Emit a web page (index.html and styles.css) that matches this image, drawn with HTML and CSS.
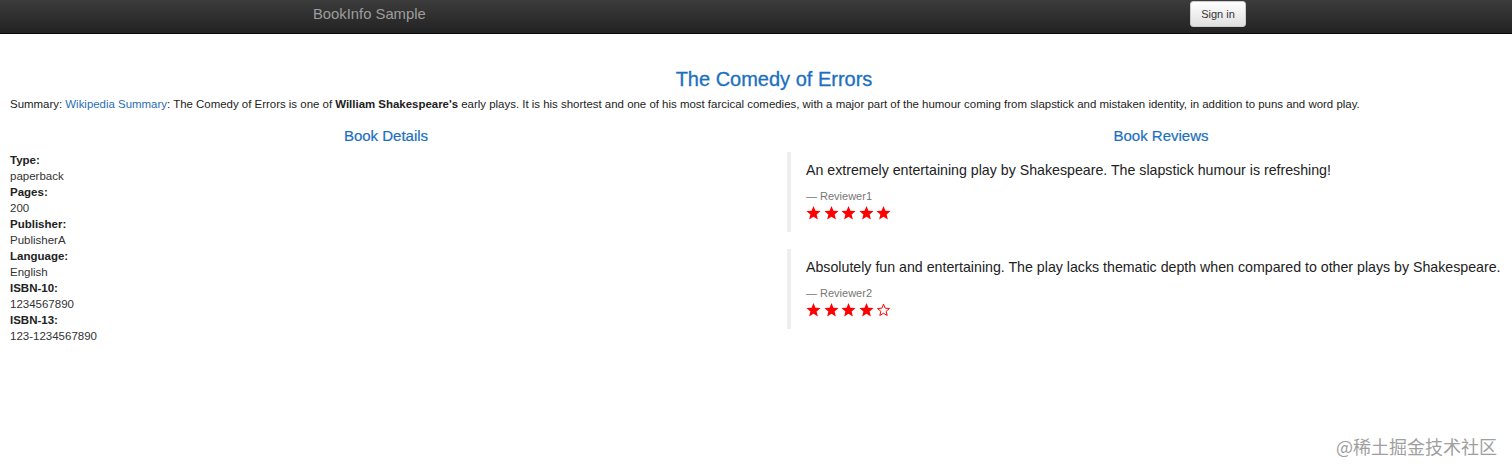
FILE: index.html
```html
<!DOCTYPE html>
<html>
<head>
<meta charset="utf-8">
<title>Bookinfo</title>
<link rel="stylesheet" href="styles.css">
</head>
<body>
<nav class="navbar">
  <span class="brand">BookInfo Sample</span>
  <button class="signin">Sign in</button>
</nav>
<main class="page">
  <h3 class="title">The Comedy of Errors</h3>
  <p class="summary">Summary: <a href="#">Wikipedia Summary</a>: The Comedy of Errors is one of <b>William Shakespeare's</b> early plays. It is his shortest and one of his most farcical comedies, with a major part of the humour coming from slapstick and mistaken identity, in addition to puns and word play.</p>
  <div class="cols">
    <section class="details">
      <h4 class="heading">Book Details</h4>
      <dl class="dl">
        <dt>Type:</dt><dd>paperback</dd>
        <dt>Pages:</dt><dd>200</dd>
        <dt>Publisher:</dt><dd>PublisherA</dd>
        <dt>Language:</dt><dd>English</dd>
        <dt>ISBN-10:</dt><dd>1234567890</dd>
        <dt>ISBN-13:</dt><dd>123-1234567890</dd>
      </dl>
    </section>
    <section class="reviews">
      <h4 class="heading">Book Reviews</h4>
      <blockquote class="review">
        <p class="rtext">An extremely entertaining play by Shakespeare. The slapstick humour is refreshing!</p>
        <small class="who">— Reviewer1</small>
        <div class="stars">
          <svg viewBox="0 0 24 24"><path class="full" d="M12 1.5l3.1 7.6 8.2.6-6.3 5.3 2 8-7-4.3-7 4.3 2-8L.7 9.7l8.2-.6z"/></svg>
          <svg viewBox="0 0 24 24"><path class="full" d="M12 1.5l3.1 7.6 8.2.6-6.3 5.3 2 8-7-4.3-7 4.3 2-8L.7 9.7l8.2-.6z"/></svg>
          <svg viewBox="0 0 24 24"><path class="full" d="M12 1.5l3.1 7.6 8.2.6-6.3 5.3 2 8-7-4.3-7 4.3 2-8L.7 9.7l8.2-.6z"/></svg>
          <svg viewBox="0 0 24 24"><path class="full" d="M12 1.5l3.1 7.6 8.2.6-6.3 5.3 2 8-7-4.3-7 4.3 2-8L.7 9.7l8.2-.6z"/></svg>
          <svg viewBox="0 0 24 24"><path class="full" d="M12 1.5l3.1 7.6 8.2.6-6.3 5.3 2 8-7-4.3-7 4.3 2-8L.7 9.7l8.2-.6z"/></svg>
        </div>
      </blockquote>
      <blockquote class="review">
        <p class="rtext">Absolutely fun and entertaining. The play lacks thematic depth when compared to other plays by Shakespeare.</p>
        <small class="who">— Reviewer2</small>
        <div class="stars">
          <svg viewBox="0 0 24 24"><path class="full" d="M12 1.5l3.1 7.6 8.2.6-6.3 5.3 2 8-7-4.3-7 4.3 2-8L.7 9.7l8.2-.6z"/></svg>
          <svg viewBox="0 0 24 24"><path class="full" d="M12 1.5l3.1 7.6 8.2.6-6.3 5.3 2 8-7-4.3-7 4.3 2-8L.7 9.7l8.2-.6z"/></svg>
          <svg viewBox="0 0 24 24"><path class="full" d="M12 1.5l3.1 7.6 8.2.6-6.3 5.3 2 8-7-4.3-7 4.3 2-8L.7 9.7l8.2-.6z"/></svg>
          <svg viewBox="0 0 24 24"><path class="full" d="M12 1.5l3.1 7.6 8.2.6-6.3 5.3 2 8-7-4.3-7 4.3 2-8L.7 9.7l8.2-.6z"/></svg>
          <svg viewBox="0 0 24 24"><path class="empty" d="M12 3.5l2.6 6.4 6.9.5-5.3 4.5 1.7 6.7-5.9-3.6-5.9 3.6 1.7-6.7-5.3-4.5 6.9-.5z"/></svg>
        </div>
      </blockquote>
    </section>
  </div>
</main>
<div class="watermark">@稀土掘金技术社区</div>
</body>
</html>
```
FILE: styles.css
```css
html, body {
  margin: 0;
  padding: 0;
  overflow: hidden;
}
body {
  font-family: "Liberation Sans", Arial, sans-serif;
  color: #333;
  background: #fff;
  width: 1512px;
  height: 472px;
  position: relative;
}
.navbar {
  height: 33px;
  background: linear-gradient(to bottom, #3c3c3c, #222);
  border-bottom: 1px solid #080808;
  display: flex;
  align-items: flex-start;
  padding-left: 313px;
  padding-right: 266px;
}
.brand {
  color: #9d9d9d;
  font-size: 14.8px;
  line-height: 28px;
}
.signin {
  margin-left: auto;
  margin-top: 1px;
  width: 56px;
  height: 26px;
  border: 1px solid #ccc;
  border-radius: 3px;
  background: linear-gradient(to bottom, #fff, #e0e0e0);
  font-family: "Liberation Sans", Arial, sans-serif;
  font-size: 11px;
  color: #333;
  padding: 0;
}
.page {
  padding: 0 10px;
}
.title {
  margin: 34px 0 0;
  padding-left: 36px;
  text-align: center;
  color: #1b6fbf;
  font-size: 20px;
  font-weight: 500;
  line-height: 22px;
  -webkit-text-stroke: 0.3px #1b6fbf;
}
.summary {
  margin: 7px 0 0;
  font-size: 11.45px;
  line-height: 15px;
  color: #222;
  white-space: nowrap;
}
.summary a {
  color: #2a6fb5;
  text-decoration: none;
}
.cols {
  display: grid;
  grid-template-columns: 752px 748px;
  column-gap: 25px;
  margin-top: 14px;
}
.heading {
  margin: 0;
  text-align: center;
  color: #1b6fbf;
  font-size: 15px;
  font-weight: 500;
  line-height: 20px;
  -webkit-text-stroke: 0.2px #1b6fbf;
}
.dl {
  margin: 6px 0 0;
  font-size: 11.5px;
  line-height: 16px;
}
.dl dt {
  font-weight: bold;
  color: #222;
}
.dl dd {
  margin: 0;
  color: #333;
}
.review {
  margin: 6px 0 17px;
  padding: 6px 0 12px 15px;
  border-left: 4px solid #eee;
}
.rtext {
  margin: 0;
  font-size: 14.2px;
  line-height: 24px;
  color: #222;
  white-space: nowrap;
}
.who {
  display: block;
  margin-top: 7px;
  font-size: 11px;
  line-height: 15px;
  color: #777;
}
.stars {
  display: flex;
  gap: 2.5px;
  margin-top: 0;
  height: 16px;
  align-items: center;
}
.stars svg {
  width: 15px;
  height: 15px;
}
.full {
  fill: #f00;
}
.empty {
  fill: none;
  stroke: #f00;
  stroke-width: 1.6;
}
.watermark {
  position: absolute;
  left: 1336px;
  top: 435px;
  font-family: "Noto Sans CJK SC", sans-serif;
  font-size: 18px;
  line-height: 22px;
  color: #888;
  opacity: 0.8;
}
```
